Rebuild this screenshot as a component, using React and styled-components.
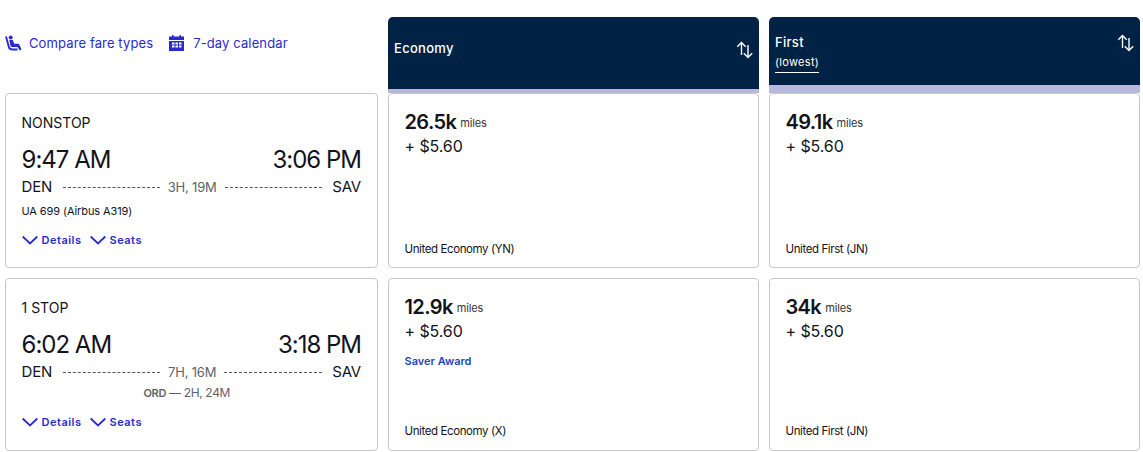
import React from "react";
import styled, { createGlobalStyle } from "styled-components";

const Global = createGlobalStyle`
  html, body { margin: 0; padding: 0; background: #fff; }
  body { font-family: Inter, "Liberation Sans", sans-serif; color: #131320; }
`;

const BLUE = "#2a2ad0";

const Grid = styled.div`
  display: grid;
  grid-template-columns: 373px 371px 371px;
  grid-template-rows: 76px 185px 173px;
  column-gap: 10px;
  padding: 17px 0 0 5px;
`;

const Tools = styled.div`
  display: flex;
  align-items: flex-start;
  gap: 16px;
  padding-top: 16px;
`;

const Tool = styled.a`
  display: flex;
  align-items: center;
  gap: ${(p) => p.$gap}px;
  height: 20px;
  font-size: 13px;
  letter-spacing: 0.12px;
  color: ${BLUE};
  svg { display: block; }
`;

const Head = styled.div`
  position: relative;
  box-sizing: border-box;
  background: #002244;
  color: #fff;
  border-radius: 5px 5px 0 0;
  border-bottom: ${(p) => p.$bar}px solid #b8b8dc;
  padding: ${(p) => p.$top}px 6px 0;
`;

const HeadName = styled.div`
  font-size: 13px;
  font-weight: 500;
  line-height: 16px;
  letter-spacing: 0.3px;
`;

const HeadNote = styled.span`
  display: inline-block;
  margin-top: -2px;
  padding-bottom: 3px;
  font-size: 11px;
  line-height: 14px;
  letter-spacing: 0.3px;
  border-bottom: 1px solid #fff;
`;

const SortIcon = styled.svg`
  position: absolute;
  right: 5px;
  top: ${(p) => p.$top}px;
`;

const Card = styled.div`
  box-sizing: border-box;
  border: 1px solid #c8c8c8;
  border-radius: 4px;
  background: #fff;
  margin-bottom: ${(p) => p.$gap || 0}px;
`;

const Flight = styled(Card)`
  padding: 20px 16px 0 15.5px;
  display: flex;
  flex-direction: column;
`;

const Stops = styled.div`
  font-size: 14px;
  line-height: 17px;
  letter-spacing: 0;
`;

const Times = styled.div`
  display: flex;
  justify-content: space-between;
  font-size: 24px;
  line-height: 30px;
  letter-spacing: -1px;
  margin-top: 14px;
`;

const Route = styled.div`
  display: flex;
  align-items: center;
  font-size: 15px;
  line-height: 18px;
  margin-top: 3px;
  letter-spacing: -0.2px;
`;

const Dash = styled.div`
  flex: 1;
  border-top: 1px dashed #555;
  margin: ${(p) => (p.$left ? "0 8px 0 10.5px" : "0 10.5px 0 8px")};
`;

const Duration = styled.span`
  font-size: 13px;
  color: #5f6368;
`;

const Craft = styled.div`
  font-size: 11px;
  line-height: 14px;
  margin-top: 8px;
  letter-spacing: -0.1px;
`;

const Layover = styled.div`
  font-size: 12px;
  line-height: 14px;
  text-align: center;
  color: #5f6368;
  margin-top: 5px;
  padding-right: 9px;
  letter-spacing: -0.35px;
  b { font-size: 11px; font-weight: 600; }
`;

const Links = styled.div`
  display: flex;
  gap: 8px;
  margin-top: 15px;
`;

const More = styled.a`
  display: flex;
  align-items: center;
  gap: 4px;
  font-size: 11px;
  font-weight: 600;
  line-height: 14px;
  letter-spacing: 0.5px;
  color: ${BLUE};
`;

const Fare = styled(Card)`
  padding: 16px 16px ${(p) => p.$bottom}px 15.5px;
  display: flex;
  flex-direction: column;
`;

const Miles = styled.div`
  display: flex;
  align-items: baseline;
  gap: 4px;
  font-size: 20px;
  font-weight: 600;
  line-height: 24px;
  letter-spacing: -0.6px;
`;

const MilesUnit = styled.span`
  font-size: 11px;
  font-weight: 400;
  letter-spacing: -0.15px;
  color: #333;
  transform: translateY(-2px);
`;

const Cash = styled.div`
  font-size: 16px;
  line-height: 20px;
  letter-spacing: -0.1px;
  margin-top: -1px;
`;

const Saver = styled.div`
  font-size: 11px;
  font-weight: 600;
  line-height: 14px;
  color: #1f45c0;
  margin-top: 13px;
`;

const Cabin = styled.div`
  margin-top: auto;
  font-size: 11.5px;
  line-height: 14px;
  letter-spacing: -0.4px;
`;

const SeatIcon = () => (
  <svg width="17" height="17" viewBox="0 0 17 17" fill={BLUE}>
    <path d="M1 1.500L3.700 11.500Q4.300 14.500 7.500 14.500H12.500" fill="none" stroke={BLUE} strokeWidth="1.900" />
    <circle cx="5.700" cy="2.400" r="2" />
    <path d="M4.300 5H7.800L9.300 8.700H13Q13.900 8.700 14.400 9.700L16.600 14.200L14.800 15.400L12.500 12H7.200Q5.800 12 5.400 10.500Z" />
  </svg>
);

const CalendarIcon = () => (
  <svg width="15" height="16" viewBox="0 0 15 16">
    <path d="M0 1.500H3V0H4.500V1.500H10.500V0H12V1.500H15V5H0Z" fill={BLUE} />
    <path d="M0 6H15V16H0Z" fill={BLUE} />
    <path d="M3 7.500H5.500V9.500H3ZM6.500 7.500H9V9.500H6.500ZM10 7.500H12.500V9.500H10ZM3 10.500H5.500V12.500H3ZM6.500 10.500H9V12.500H6.500ZM10 10.500H12.500V12.500H10Z" fill="#fff" />
  </svg>
);

const Sort = ({ top }) => (
  <SortIcon $top={top} width="18" height="18" viewBox="0 0 18 18" fill="none" stroke="#fff" strokeWidth="1.4">
    <path d="M5.500 14V1.500M1.300 5.700L5.500 1.500l4.200 4.200" />
    <path d="M12 4v12.500M7.800 12.300L12 16.500l4.200-4.200" />
  </SortIcon>
);

const Chevron = () => (
  <svg width="16" height="10" viewBox="0 0 16 10" fill="none" stroke={BLUE} strokeWidth="1.800">
    <path d="M.7 1.500L8 8.500l7.300-7" />
  </svg>
);

const FlightCard = ({ stops, dep, arr, time, gap, children }) => (
  <Flight $gap={gap}>
    <Stops>{stops}</Stops>
    <Times>
      <span>{dep}</span>
      <span>{arr}</span>
    </Times>
    <Route>
      <span>DEN</span>
      <Dash $left />
      <Duration>{time}</Duration>
      <Dash />
      <span>SAV</span>
    </Route>
    {children}
    <Links>
      <More><Chevron />Details</More>
      <More><Chevron />Seats</More>
    </Links>
  </Flight>
);

const FareCard = ({ miles, cabin, saver, gap, bottom }) => (
  <Fare $gap={gap} $bottom={bottom}>
    <Miles>{miles}<MilesUnit>miles</MilesUnit></Miles>
    <Cash>+ $5.60</Cash>
    {saver && <Saver>Saver Award</Saver>}
    <Cabin>{cabin}</Cabin>
  </Fare>
);

export default function App() {
  return (
    <>
      <Global />
      <Grid>
        <Tools>
          <Tool $gap={7}><SeatIcon />Compare fare types</Tool>
          <Tool $gap={9}><CalendarIcon />7-day calendar</Tool>
        </Tools>
        <Head $bar={4} $top={23}>
          <HeadName>Economy</HeadName>
          <Sort top={24} />
        </Head>
        <Head $bar={8} $top={17}>
          <HeadName>First</HeadName>
          <HeadNote>(lowest)</HeadNote>
          <Sort top={17} />
        </Head>

        <FlightCard stops="NONSTOP" dep="9:47 AM" arr="3:06 PM" time="3H, 19M" gap={10}>
          <Craft>UA 699 (Airbus A319)</Craft>
        </FlightCard>
        <FareCard miles="26.5k" cabin="United Economy (YN)" gap={10} bottom={11} />
        <FareCard miles="49.1k" cabin="United First (JN)" gap={10} bottom={11} />

        <FlightCard stops="1 STOP" dep="6:02 AM" arr="3:18 PM" time="7H, 16M">
          <Layover><b>ORD</b> — 2H, 24M</Layover>
        </FlightCard>
        <FareCard miles="12.9k" cabin="United Economy (X)" saver bottom={12} />
        <FareCard miles="34k" cabin="United First (JN)" bottom={12} />
      </Grid>
    </>
  );
}
